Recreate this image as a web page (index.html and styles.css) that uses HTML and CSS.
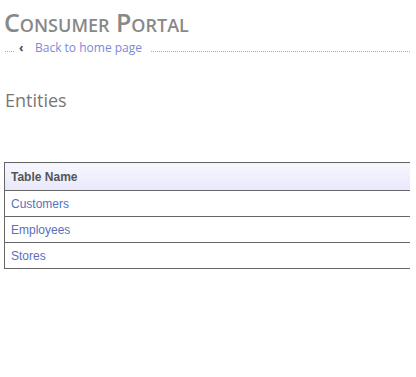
FILE: index.html
```html
<!DOCTYPE html>
<html lang="en">

<head>
  <meta charset="UTF-8">
  <title>Consumer Portal</title>
  <link rel="stylesheet" href="styles.css">
</head>

<body>
  <div class="page">
    <h1 class="site-title">Consumer Portal</h1>
    <div class="breadcrumb">
      <span class="dots short"></span>
      <a href="#" class="back-link"><span class="arrow">&lsaquo;</span>Back to home page</a>
      <span class="dots long"></span>
    </div>

    <h2 class="page-title">Entities</h2>

    <div class="grid-wrap">
      <table class="grid">
        <thead>
          <tr>
            <th>Table Name</th>
          </tr>
        </thead>
        <tbody>
          <tr>
            <td><a href="#">Customers</a></td>
          </tr>
          <tr>
            <td><a href="#">Employees</a></td>
          </tr>
          <tr>
            <td><a href="#">Stores</a></td>
          </tr>
        </tbody>
      </table>
    </div>
  </div>
</body>

</html>
```

FILE: styles.css
```css
* {
  margin: 0;
  padding: 0;
  box-sizing: border-box;
}

body {
  font-family: 'Liberation Sans', Arial, sans-serif;
  background: #fff;
  color: #555;
}

.page {
  padding: 8px 6px 0 5px;
}

.site-title {
  font-family: 'Open Sans', sans-serif;
  font-variant: small-caps;
  font-size: 25px;
  font-weight: 600;
  line-height: 28px;
  color: #888;
  margin-left: -1px;
}

.breadcrumb {
  display: flex;
  align-items: center;
  height: 18px;
  margin-top: 2px;
}

.dots {
  border-bottom: 1px dotted #aaa;
  height: 1px;
  margin-top: 8px;
}

.dots.short {
  width: 9px;
}

.dots.long {
  flex: 1;
  margin-left: 9px;
}

.back-link {
  font-family: 'Open Sans', sans-serif;
  font-size: 12px;
  color: #7b8ad8;
  text-decoration: none;
}

.arrow {
  display: inline-block;
  width: 21px;
  padding-left: 5px;
  font-weight: bold;
  color: #445;
}

.page-title {
  font-family: 'Open Sans', sans-serif;
  font-size: 18px;
  font-weight: normal;
  color: #777;
  margin-top: 32px;
}

.grid-wrap {
  margin-top: 50px;
  margin-left: -1px;
  overflow: hidden;
}

.grid {
  width: 420px;
  border-collapse: collapse;
  font-size: 12px;
}

.grid th,
.grid td {
  border: 1px solid #666;
  text-align: left;
  padding: 0 6px;
}

.grid th {
  height: 28px;
  font-weight: bold;
  color: #555;
  background: linear-gradient(#f7f7ff, #e8e8fb);
}

.grid td {
  height: 26px;
}

.grid td a {
  color: #5a6fc0;
  text-decoration: none;
}
```
